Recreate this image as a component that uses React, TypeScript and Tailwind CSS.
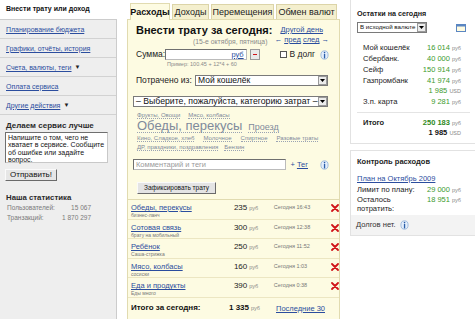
import React from "react";

const LINK = "text-[#2b4d9e] underline";

function Info() {
  return (
    <svg width="9" height="10" viewBox="0 0 9 10" className="shrink-0">
      <ellipse cx="4.5" cy="5" rx="3.6" ry="4.2" fill="#e3eefb" stroke="#8fb0d8" strokeWidth="0.8" />
      <rect x="3.9" y="4" width="1.3" height="4.4" fill="#2c5ea8" />
      <circle cx="4.55" cy="2.6" r="0.8" fill="#2c5ea8" />
    </svg>
  );
}

function RedX() {
  return (
    <svg width="8" height="8" viewBox="0 0 8 8">
      <path d="M1 1L7 7M7 1L1 7" stroke="#d0141a" strokeWidth="1.8" strokeLinecap="round" />
    </svg>
  );
}

function Select({ text, className, fs }: { text: string; className: string; fs: string }) {
  return (
    <div className={`flex items-center border border-[#7a7a7a] bg-white h-[11px] ${className}`}>
      <span className={`flex-1 pl-[2px] ${fs} leading-none whitespace-nowrap text-[#111]`}>{text}</span>
      <span className="w-[9px] h-[9px] bg-[#ececec] border border-[#9a9a9a] flex items-center justify-center shrink-0">
        <svg width="5" height="3" viewBox="0 0 5 3">
          <path d="M0 0H5L2.5 3Z" fill="#000" />
        </svg>
      </span>
    </div>
  );
}

const menu = [
  { t: "Планирование бюджета", arrow: false },
  { t: "Графики, отчёты, история", arrow: false },
  { t: "Счета, валюты, теги", arrow: true },
  { t: "Оплата сервиса", arrow: false },
  { t: "Другие действия", arrow: true },
];

const rows = [
  { c: "Обеды, перекусы", s: "бизнес-ланч", a: "235", t: "Сегодня 16:43" },
  { c: "Сотовая связь", s: "брату на мобильный", a: "300", t: "Сегодня 12:38" },
  { c: "Ребёнок", s: "Саша-стрижка", a: "250", t: "Сегодня 11:52" },
  { c: "Мясо, колбасы", s: "сосиски", a: "160", t: "Сегодня 1:03" },
  { c: "Еда и продукты", s: "Еды много", a: "390", t: "Сегодня 0:38" },
];

const balances = [
  { n: "Мой кошелёк", v: "16 014" },
  { n: "Сбербанк.", v: "40 000" },
  { n: "Сейф", v: "150 914" },
  { n: "Газпромбанк", v: "41 974", usd: "1 985" },
  { n: "З.п. карта", v: "9 281" },
];

function Tag({ children, size }: { children: React.ReactNode; size: string }) {
  return (
    <span className={`${size} text-[#7f8a9c] border-b border-dotted border-[#9aa3b3] leading-none`}>{children}</span>
  );
}

export default function App() {
  return (
    <div className="w-[475px] h-[319px] overflow-hidden bg-white flex whitespace-nowrap font-['Liberation_Sans',Arial,sans-serif] text-[#111]">
      {/* LEFT */}
      <div className="w-[127px] shrink-0 flex flex-col">
        <div className="h-[19px] bg-white flex items-center pl-[6px] text-[7px] font-bold text-[#111]">
          Внести трату или доход
        </div>
        <div className="w-[117px] flex-1 bg-[#eeeeee] border-r border-t border-[#cccccc]">
          {menu.map((m) => (
            <div key={m.t} className="h-[19px] border-b border-[#d2d2d2] flex items-center pl-[6px] gap-[3px]">
              <span className={`text-[7px] leading-none ${LINK}`}>{m.t}</span>
              {m.arrow && <span className="text-[6px] leading-none text-[#222]">▼</span>}
            </div>
          ))}
          <div className="px-[5px] pt-[5px]">
            <div className="text-[8px] leading-[11px] font-bold text-[#2a2a2a] pl-[1px]">Делаем сервис лучше</div>
            <div className="mt-[1px] w-[103px] h-[31px] bg-white border border-t-[#6f6f6f] border-l-[#6f6f6f] border-r-[#c8c8c8] border-b-[#c8c8c8] px-[2px] pt-[1px] text-[7px] leading-[7.4px] text-[#111] whitespace-normal">
              Напишите о том, чего не хватает в сервисе. Сообщите об ошибке или задайте вопрос.
            </div>
            <div className="mt-[6px] w-[52px] h-[12px] bg-[#e6e6e6] border border-t-[#fafafa] border-l-[#fafafa] border-r-[#6a6a6a] border-b-[#6a6a6a] flex items-center justify-center text-[8px] leading-none text-[#111]">
              Отправить!
            </div>
            <div className="mt-[11px] text-[7.8px] leading-[11px] font-bold text-[#2a2a2a] pl-[1px]">Наша статистика</div>
            <div className="pl-[2px] pr-[20px] text-[6.5px] text-[#7a7a7a]">
              <div className="flex justify-between h-[10px] items-center">
                <span>Пользователей:</span>
                <span>15 067</span>
              </div>
              <div className="flex justify-between h-[10px] items-center">
                <span>Транзакций:</span>
                <span>1 870 297</span>
              </div>
            </div>
          </div>
        </div>
      </div>

      {/* CENTER */}
      <div className="w-[213px] shrink-0 flex flex-col">
        <div className="h-[19px] flex items-end pl-[3px] gap-[2px] relative z-10">
          <div className="w-[40px] h-[17px] -mb-[1px] bg-[#fdfbe2] border border-b-0 border-[#e1dbb0] flex items-center justify-center text-[9px] leading-none font-semibold text-[#111]">
            Расходы
          </div>
          <div className="w-[37px] h-[15px] bg-[#f4efce] border border-b-0 border-[#dcd4a8] flex items-center justify-center text-[9px] leading-none text-[#222]">
            Доходы
          </div>
          <div className="w-[63px] h-[15px] bg-[#f4efce] border border-b-0 border-[#dcd4a8] flex items-center justify-center text-[9px] leading-none text-[#222]">
            Перемещения
          </div>
          <div className="w-[61px] h-[15px] bg-[#f4efce] border border-b-0 border-[#dcd4a8] flex items-center justify-center text-[9px] leading-none text-[#222]">
            Обмен валют
          </div>
        </div>
        <div className="h-[181px] bg-[#fdfbe2] border border-[#e1dbb0] pl-[8px] pr-[10px] pt-[4px] flex flex-col">
          <div className="flex justify-between">
            <div className="flex flex-col">
              <div className="text-[11px] leading-[13px] font-bold text-[#111]">Внести трату за сегодня:</div>
              <div className="ml-[57px] text-[6.8px] leading-[9px] text-[#8a8a8a]">(15-е октября, пятница)</div>
            </div>
            <div className="flex flex-col items-center pt-[1px]">
              <span className={`text-[7.5px] leading-[9px] ${LINK}`}>Другой день</span>
              <span className="text-[7.5px] leading-[9px] mt-[1px] text-[#2b4d9e]">
                ← <span className="underline">пред</span> <span className="underline">след</span> →
              </span>
            </div>
          </div>
          <div className="mt-[3px] flex items-center h-[11px]">
            <span className="w-[29px] text-[8.5px] leading-none text-[#222]">Сумма:</span>
            <div className="w-[83px] h-[11px] bg-white border border-t-[#6f6f6f] border-l-[#6f6f6f] border-r-[#bbb] border-b-[#bbb] flex items-center justify-end pr-[2px]">
              <span className={`text-[7.5px] leading-none ${LINK}`}>руб</span>
            </div>
            <div className="ml-[3px] w-[11px] h-[11px] bg-[#e9e9e9] border border-[#9a9a9a] flex items-center justify-center">
              <span className="w-[4px] h-[1.5px] bg-[#d0141a]" />
            </div>
            <div className="ml-[20px] w-[7px] h-[7px] border border-[#555] bg-white" />
            <span className="ml-[2px] text-[8.5px] leading-none text-[#222]">В долг</span>
            <span className="ml-[5px]"><Info /></span>
          </div>
          <div className="mt-[1px] pl-[31px] text-[5.5px] leading-[6px] text-[#8a8a8a]">
            Пример: 100.45 + 12*4 + 60
          </div>
          <div className="mt-[8px] flex items-center h-[11px]">
            <span className="w-[59px] text-[8.5px] leading-none text-[#222]">Потрачено из:</span>
            <Select text="Мой кошелёк" fs="text-[8.5px]" className="w-[133px]" />
          </div>
          <Select text="– Выберите, пожалуйста, категорию затрат –" fs="text-[8.7px]" className="mt-[10px] -ml-[3px] w-[195px]" />
          <div className="pl-[1px] mt-[5px] flex flex-col">
            <div className="flex gap-[8px] h-[7px] items-end">
              <Tag size="text-[6px]">Фрукты, Овощи</Tag>
              <Tag size="text-[6px]">Мясо, колбасы</Tag>
            </div>
            <div className="flex gap-[6px] h-[14px] items-end">
              <Tag size="text-[13px] text-[#5d6678]">Обеды, перекусы</Tag>
              <span className="text-[9px] leading-none text-[#7f8a9c] border-b border-dotted border-[#9aa3b3]">Проезд</span>
            </div>
            <div className="flex gap-[9px] h-[9px] items-end">
              <Tag size="text-[6px]">Кино, Сладкое, хлеб</Tag>
              <Tag size="text-[6px]">Молочное</Tag>
              <Tag size="text-[6px]">Спиртное</Tag>
              <Tag size="text-[6px]">Разовые траты</Tag>
            </div>
            <div className="flex gap-[6px] h-[9px] items-end">
              <Tag size="text-[6px]">ДР, праздники, поздравления</Tag>
              <Tag size="text-[6px]">Бензин</Tag>
            </div>
          </div>
          <div className="mt-[8px] -ml-[3px] flex items-center h-[11px]">
            <div className="w-[155px] h-[11px] bg-white border border-t-[#6f6f6f] border-l-[#6f6f6f] border-r-[#bbb] border-b-[#bbb] flex items-center pl-[2px]">
              <span className="text-[7.5px] leading-none text-[#9a9a9a]">Комментарий и теги</span>
            </div>
            <span className="ml-[4px] text-[7.5px] leading-none text-[#2b4d9e]">+ <span className="underline">Тег</span></span>
            <span className="ml-[12px]"><Info /></span>
          </div>
          <div className="mt-[12px] ml-[1px] w-[79px] h-[12px] bg-[#e4e4e4] border border-t-[#fafafa] border-l-[#fafafa] border-r-[#6a6a6a] border-b-[#6a6a6a] flex items-center justify-center text-[6.5px] leading-none text-[#111]">
            Зафиксировать трату
          </div>
        </div>
        <div className="flex flex-col bg-[#fdfbe2] border-x border-[#e1dbb0]">
          {rows.map((r) => (
            <div key={r.c} className="h-[19.6px] border-b border-[#ece6c2] flex items-start pt-[3px] pl-[3px]">
              <div className="w-[93px] flex flex-col">
                <span className={`text-[7.5px] leading-[9px] ${LINK}`}>{r.c}</span>
                <span className="text-[5px] leading-[6px] text-[#777]">{r.s}</span>
              </div>
              <div className="w-[25px] text-right text-[8px] leading-[9px] text-[#222]">{r.a}</div>
              <div className="ml-[2px] w-[25px] text-[5.5px] leading-[10px] text-[#888]">руб</div>
              <div className="w-[58px] text-[5.5px] leading-[9px] text-[#777]">{r.t}</div>
              <div className="pt-[1px]"><RedX /></div>
            </div>
          ))}
          <div className="h-[21px] flex items-center pl-[3px]">
            <div className="w-[87px] text-[8px] leading-none font-bold text-[#111]">Итого за сегодня:</div>
            <div className="w-[31px] text-right text-[8px] leading-none font-bold text-[#111]">1 335</div>
            <div className="ml-[2px] w-[25px] text-[5.5px] leading-none text-[#888]">руб</div>
            <span className={`text-[7.5px] leading-none ${LINK}`}>Последние 30</span>
          </div>
        </div>
      </div>

      {/* RIGHT */}
      <div className="ml-[10px] w-[125px] shrink-0 flex flex-col">
        <div className="h-[144px] border-l border-b border-[#e2e2e2] pl-[6px] pr-[5px] pt-[9px]">
          <div className="text-[7.2px] leading-[10px] font-bold text-[#222]">Остатки на сегодня</div>
          <div className="mt-[3px] flex items-center justify-between">
            <Select text="В исходной валюте" fs="text-[6.2px]" className="w-[70px]" />
            <svg width="10" height="8" viewBox="0 0 10 8" className="mr-[4px]">
              <rect x="0.5" y="0.5" width="9" height="7" fill="#fffbe0" stroke="#5b86c2" />
              <rect x="0.5" y="0.5" width="9" height="2" fill="#5b86c2" />
            </svg>
          </div>
          <div className="mt-[10px] pl-[6px] pr-[9px]">
            {balances.map((b) => (
              <div key={b.n} className="flex justify-between items-start min-h-[10.5px] mb-[0.5px]">
                <span className="text-[7.6px] leading-[10px] text-[#222]">{b.n}</span>
                <div className="flex flex-col items-end">
                  <span className="text-[7.5px] leading-[10px] text-[#3c9a2e]">
                    {b.v} <span className="text-[5.5px] text-[#888]">руб</span>
                  </span>
                  {b.usd && (
                    <span className="text-[7.5px] leading-[9px] text-[#3c9a2e]">
                      {b.usd} <span className="text-[5.5px] text-[#888]">USD</span>
                    </span>
                  )}
                </div>
              </div>
            ))}
          </div>
          <div className="mt-[5px] border-t border-[#e4e4e4] pl-[6px] pr-[9px] pt-[5px]">
            <div className="flex justify-between">
              <span className="text-[7.5px] leading-[10px] font-bold text-[#222]">Итого</span>
              <span className="text-[7.5px] leading-[10px] font-bold text-[#2f8a22]">
                250 183 <span className="text-[5.5px] font-normal text-[#888]">руб</span>
              </span>
            </div>
            <div className="flex justify-end">
              <span className="text-[7.5px] leading-[10px] font-bold text-[#111]">
                1 985 <span className="text-[5.5px] font-normal text-[#888]">USD</span>
              </span>
            </div>
          </div>
        </div>
        <div className="mt-[6px] h-[86px] border-l border-t border-b border-[#e2e2e2] flex flex-col">
          <div className="pl-[6px] pt-[6px] text-[7.5px] leading-[10px] font-bold text-[#222]">Контроль расходов</div>
          <div className="pl-[6px] pr-[14px] pt-[7px] flex flex-col">
            <span className={`text-[7.5px] leading-[10px] ${LINK}`}>План на Октябрь 2009</span>
            <div className="mt-[1px] flex justify-between">
              <span className="text-[7.6px] leading-[10px] text-[#222]">Лимит по плану:</span>
              <span className="text-[7.5px] leading-[10px] text-[#3c9a2e]">29 000 <span className="text-[5.5px] text-[#888]">руб</span></span>
            </div>
            <div className="flex justify-between">
              <span className="text-[7.6px] leading-[8.5px] text-[#222] pt-[1px]">Осталось<br />потратить:</span>
              <span className="text-[7.5px] leading-[10px] text-[#3c9a2e]">18 951 <span className="text-[5.5px] text-[#888]">руб</span></span>
            </div>
          </div>
          <div className="mt-auto h-[20px] bg-[#f3f3f3] flex items-center pl-[5px] gap-[4px]">
            <span className="text-[7.6px] leading-none text-[#333]">Долгов нет.</span>
            <Info />
          </div>
        </div>
      </div>
    </div>
  );
}
